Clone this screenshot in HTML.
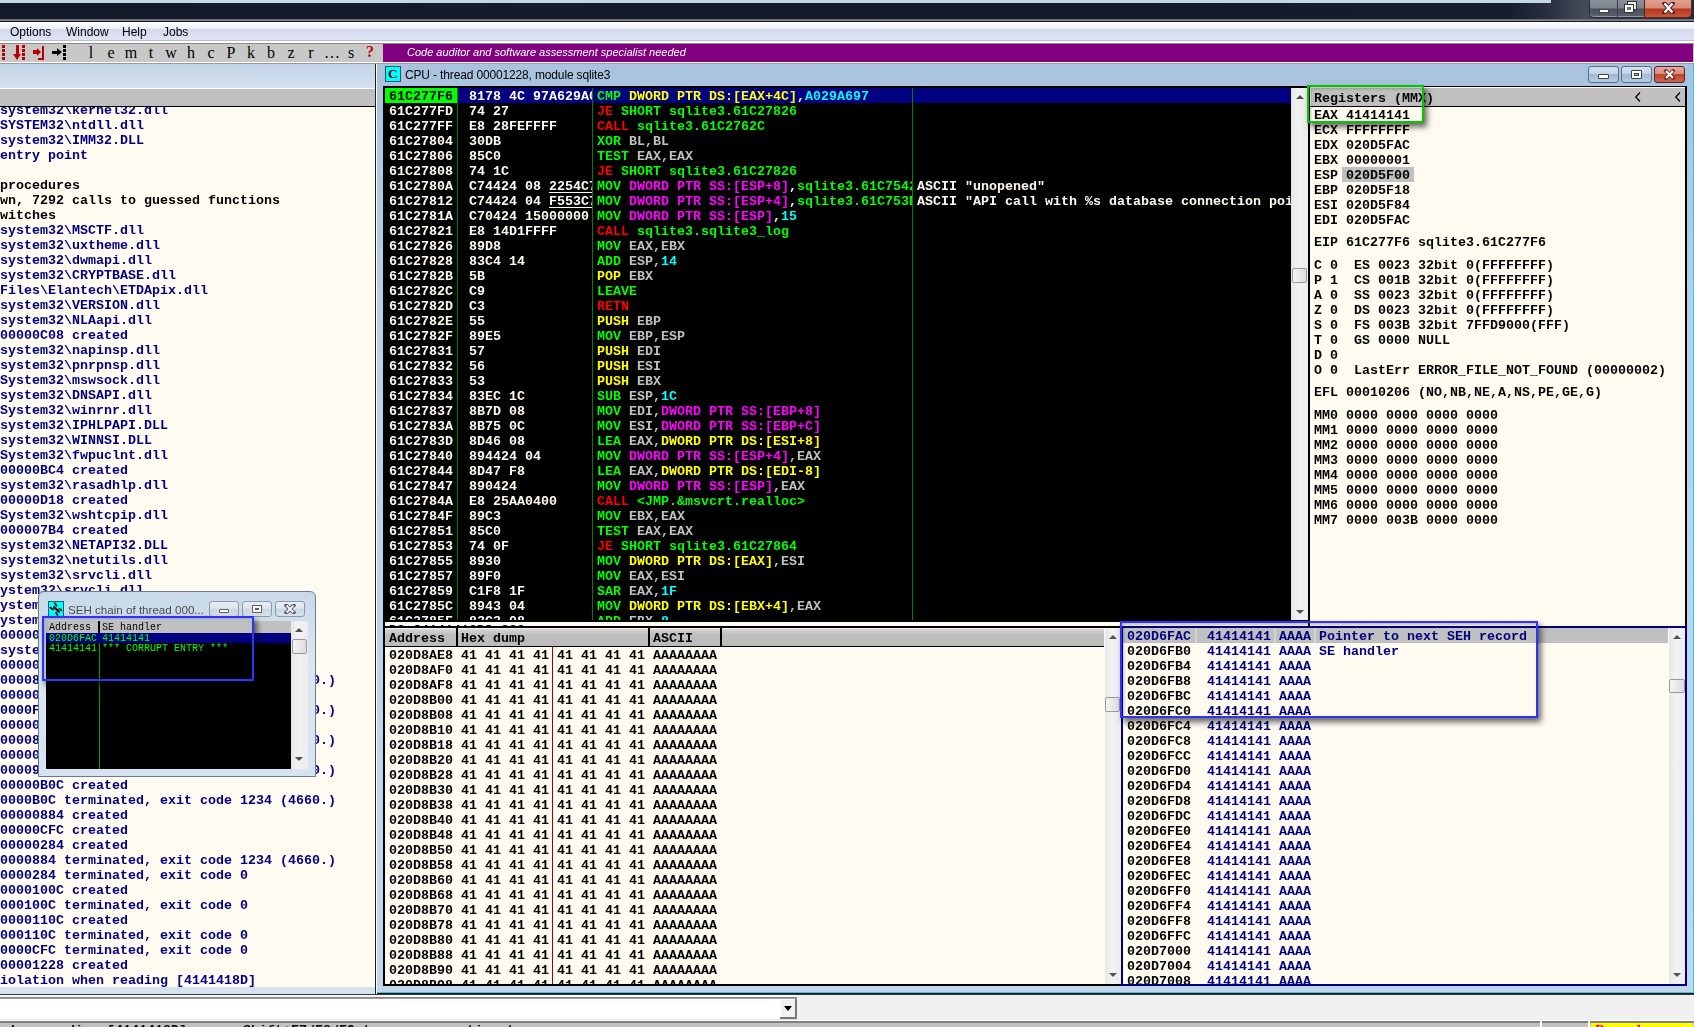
<!DOCTYPE html><html><head><meta charset="utf-8"><style>html,body{margin:0;padding:0;}body{width:1694px;height:1027px;overflow:hidden;position:relative;background:#F0F0F0;}div{box-sizing:border-box;}.m{font-family:'Liberation Mono',monospace;font-weight:bold;font-size:13.33px;line-height:15px;white-space:pre;will-change:transform;}.s{font-family:"Liberation Sans",sans-serif;will-change:transform;}</style></head><body><div style="position:absolute;left:0px;top:0px;width:1694px;height:21px;background:linear-gradient(90deg,#141a2a 0%,#141b2b 75%,#161d2c 89%,#2a3040 91.5%,#454b58 93.5%,#30364a 96%,#222838 100%);"></div><div style="position:absolute;left:0px;top:0px;width:1551px;height:3px;background:#c5d7ea;"></div><div style="position:absolute;left:0px;top:19px;width:1694px;height:2px;background:linear-gradient(#5d6370,#8a8e98);"></div><div style="position:absolute;left:0px;top:21px;width:1694px;height:1px;background:#151820;"></div><div style="position:absolute;left:1589px;top:0px;width:103px;height:18px;border:1px solid #2a2e36;border-top:none;border-radius:0 0 5px 5px;background:linear-gradient(#8a9099 0%,#7d838d 45%,#4a505c 55%,#5a606c 100%);box-shadow:inset 0 -1px 0 rgba(255,255,255,0.35);"></div><div style="position:absolute;left:1644px;top:0px;width:48px;height:18px;border:1px solid #5a2620;border-top:none;border-radius:0 0 5px 0;background:linear-gradient(#e2a090 0%,#d88a78 45%,#b8381c 55%,#c9553a 100%);"></div><div style="position:absolute;left:1617px;top:0px;width:1px;height:17px;background:#3b3f48;"></div><div style="position:absolute;left:1599px;top:9px;width:10px;height:4px;background:#fff;border:1px solid #444;"></div><div style="position:absolute;left:1628px;top:2px;width:8px;height:7px;border:2px solid #e8e8e8;box-shadow:0 0 0 1px #333;"></div><div style="position:absolute;left:1625px;top:5px;width:8px;height:7px;border:2px solid #fff;box-shadow:0 0 0 1px #333;background:#6a707a;"></div><svg style="position:absolute;left:1662px;top:2px" width="13" height="12"><path d="M2.5 1.5 L10.5 10.5 M10.5 1.5 L2.5 10.5" stroke="#4a2020" stroke-width="4.2" stroke-linecap="square"/><path d="M2.5 1.5 L10.5 10.5 M10.5 1.5 L2.5 10.5" stroke="#ffffff" stroke-width="2.4"/></svg><div style="position:absolute;left:0px;top:22px;width:1694px;height:18px;background:linear-gradient(#ffffff 0%,#eef1f8 35%,#e6eaf5 38%,#d4daee 41%,#dee3f4 100%);"></div><div style="position:absolute;left:0px;top:40px;width:1694px;height:1px;background:#b8bece;"></div><div style="position:absolute;left:0px;top:41px;width:1694px;height:2px;background:#ffffff;"></div><div class="s" style="position:absolute;left:10px;top:25px;font-size:12px;color:#000;">Options</div><div class="s" style="position:absolute;left:66px;top:25px;font-size:12px;color:#000;">Window</div><div class="s" style="position:absolute;left:122px;top:25px;font-size:12px;color:#000;">Help</div><div class="s" style="position:absolute;left:163px;top:25px;font-size:12px;color:#000;">Jobs</div><div style="position:absolute;left:0px;top:43px;width:1694px;height:1px;background:#8a8c88;"></div><div style="position:absolute;left:0px;top:44px;width:1694px;height:18px;background:#c8c8c8;"></div><div style="position:absolute;left:0px;top:62px;width:1694px;height:1px;background:#ffffff;"></div><div style="position:absolute;left:0px;top:63px;width:1694px;height:1px;background:#9a9a9a;"></div><div style="position:absolute;left:2px;top:45px;width:3px;height:3px;background:#b80000;"></div><div style="position:absolute;left:22px;top:45px;width:3px;height:3px;background:#b80000;"></div><div style="position:absolute;left:63px;top:45px;width:3px;height:3px;background:#000;"></div><div style="position:absolute;left:2px;top:49px;width:3px;height:3px;background:#b80000;"></div><div style="position:absolute;left:22px;top:49px;width:3px;height:3px;background:#b80000;"></div><div style="position:absolute;left:63px;top:49px;width:3px;height:3px;background:#000;"></div><div style="position:absolute;left:2px;top:53px;width:3px;height:3px;background:#b80000;"></div><div style="position:absolute;left:22px;top:53px;width:3px;height:3px;background:#b80000;"></div><div style="position:absolute;left:63px;top:53px;width:3px;height:3px;background:#000;"></div><div style="position:absolute;left:2px;top:57px;width:3px;height:3px;background:#b80000;"></div><div style="position:absolute;left:22px;top:57px;width:3px;height:3px;background:#b80000;"></div><div style="position:absolute;left:63px;top:57px;width:3px;height:3px;background:#000;"></div><div style="position:absolute;left:16px;top:45px;width:3px;height:10px;background:#b80000;"></div><div style="position:absolute;left:13px;top:54px;width:0;height:0;border-left:4.5px solid transparent;border-right:4.5px solid transparent;border-top:6px solid #b80000;"></div><div style="position:absolute;left:33px;top:50px;width:5px;height:4px;background:#b80000;"></div><div style="position:absolute;left:37px;top:48px;width:0;height:0;border-top:4px solid transparent;border-bottom:4px solid transparent;border-left:4px solid #b80000;"></div><div style="position:absolute;left:42px;top:46px;width:2px;height:14px;background:#b80000;"></div><div style="position:absolute;left:38px;top:58px;width:6px;height:2px;background:#b80000;"></div><div style="position:absolute;left:52px;top:51px;width:6px;height:3px;background:#000;"></div><div style="position:absolute;left:57px;top:48px;width:0;height:0;border-top:4.5px solid transparent;border-bottom:4.5px solid transparent;border-left:5px solid #000;"></div><div style="position:absolute;left:84px;top:44px;font-family:'Liberation Serif',serif;font-size:16px;color:#000;width:14px;text-align:center;">l</div><div style="position:absolute;left:104px;top:44px;font-family:'Liberation Serif',serif;font-size:16px;color:#000;width:14px;text-align:center;">e</div><div style="position:absolute;left:124px;top:44px;font-family:'Liberation Serif',serif;font-size:16px;color:#000;width:14px;text-align:center;">m</div><div style="position:absolute;left:144px;top:44px;font-family:'Liberation Serif',serif;font-size:16px;color:#000;width:14px;text-align:center;">t</div><div style="position:absolute;left:164px;top:44px;font-family:'Liberation Serif',serif;font-size:16px;color:#000;width:14px;text-align:center;">w</div><div style="position:absolute;left:184px;top:44px;font-family:'Liberation Serif',serif;font-size:16px;color:#000;width:14px;text-align:center;">h</div><div style="position:absolute;left:204px;top:44px;font-family:'Liberation Serif',serif;font-size:16px;color:#000;width:14px;text-align:center;">c</div><div style="position:absolute;left:224px;top:44px;font-family:'Liberation Serif',serif;font-size:16px;color:#000;width:14px;text-align:center;">P</div><div style="position:absolute;left:244px;top:44px;font-family:'Liberation Serif',serif;font-size:16px;color:#000;width:14px;text-align:center;">k</div><div style="position:absolute;left:264px;top:44px;font-family:'Liberation Serif',serif;font-size:16px;color:#000;width:14px;text-align:center;">b</div><div style="position:absolute;left:284px;top:44px;font-family:'Liberation Serif',serif;font-size:16px;color:#000;width:14px;text-align:center;">z</div><div style="position:absolute;left:304px;top:44px;font-family:'Liberation Serif',serif;font-size:16px;color:#000;width:14px;text-align:center;">r</div><div style="position:absolute;left:324px;top:44px;font-family:'Liberation Serif',serif;font-size:16px;color:#000;width:14px;text-align:center;">…</div><div style="position:absolute;left:344px;top:44px;font-family:'Liberation Serif',serif;font-size:16px;color:#000;width:14px;text-align:center;">s</div><div style="position:absolute;left:366px;top:43px;font-family:'Liberation Serif',serif;font-weight:bold;font-size:16px;color:#c00000;">?</div><div style="position:absolute;left:383px;top:44px;width:1310px;height:18px;background:#800080;"></div><div class="s" style="position:absolute;left:407px;top:46px;font-size:11px;font-style:italic;color:#fff;">Code auditor and software assessment specialist needed</div><div style="position:absolute;left:0px;top:64px;width:1694px;height:929px;background:#b9d1ea;"></div><div style="position:absolute;left:0px;top:64px;width:375px;height:24px;background:linear-gradient(#c3d4e7,#d3e1f0);"></div><div style="position:absolute;left:0px;top:88px;width:375px;height:1px;background:#ffffff;"></div><div style="position:absolute;left:0px;top:89px;width:375px;height:17px;background:#c0c0c0;"></div><div style="position:absolute;left:0px;top:106px;width:375px;height:1px;background:#000;"></div><div style="position:absolute;left:0px;top:107px;width:375px;height:880px;background:#FFFBF0;"></div><div style="position:absolute;left:0px;top:987px;width:375px;height:7px;background:#d6e2f0;"></div><div style="position:absolute;left:375px;top:64px;width:1px;height:930px;background:#1e1e1e;"></div><div style="position:absolute;left:376px;top:64px;width:1px;height:930px;background:#ffffff;"></div><div style="position:absolute;left:0;top:107px;width:375px;height:880px;overflow:hidden;"><div class="m" style="position:absolute;left:0px;top:-4px;"><div style="height:15px;color:#000080;">system32\kernel32.dll</div><div style="height:15px;color:#000080;">SYSTEM32\ntdll.dll</div><div style="height:15px;color:#000080;">system32\IMM32.DLL</div><div style="height:15px;color:#000080;">entry point</div><div style="height:15px;color:#000080;"></div><div style="height:15px;color:#000;">procedures</div><div style="height:15px;color:#000;">wn, 7292 calls to guessed functions</div><div style="height:15px;color:#000;">witches</div><div style="height:15px;color:#000080;">system32\MSCTF.dll</div><div style="height:15px;color:#000080;">system32\uxtheme.dll</div><div style="height:15px;color:#000080;">system32\dwmapi.dll</div><div style="height:15px;color:#000080;">system32\CRYPTBASE.dll</div><div style="height:15px;color:#000080;">Files\Elantech\ETDApix.dll</div><div style="height:15px;color:#000080;">system32\VERSION.dll</div><div style="height:15px;color:#000080;">system32\NLAapi.dll</div><div style="height:15px;color:#000080;">00000C08 created</div><div style="height:15px;color:#000080;">system32\napinsp.dll</div><div style="height:15px;color:#000080;">system32\pnrpnsp.dll</div><div style="height:15px;color:#000080;">System32\mswsock.dll</div><div style="height:15px;color:#000080;">system32\DNSAPI.dll</div><div style="height:15px;color:#000080;">System32\winrnr.dll</div><div style="height:15px;color:#000080;">system32\IPHLPAPI.DLL</div><div style="height:15px;color:#000080;">system32\WINNSI.DLL</div><div style="height:15px;color:#000080;">System32\fwpuclnt.dll</div><div style="height:15px;color:#000080;">00000BC4 created</div><div style="height:15px;color:#000080;">system32\rasadhlp.dll</div><div style="height:15px;color:#000080;">00000D18 created</div><div style="height:15px;color:#000080;">System32\wshtcpip.dll</div><div style="height:15px;color:#000080;">000007B4 created</div><div style="height:15px;color:#000080;">system32\NETAPI32.DLL</div><div style="height:15px;color:#000080;">system32\netutils.dll</div><div style="height:15px;color:#000080;">system32\srvcli.dll</div><div style="height:15px;color:#000080;">ystem32\srvcli.dll</div><div style="height:15px;color:#000080;">ystem32\sspicli.dll</div><div style="height:15px;color:#000080;">ystem32\sechost.dll</div><div style="height:15px;color:#000080;">00000C28 created</div><div style="height:15px;color:#000080;">system32\apphelp.dll</div><div style="height:15px;color:#000080;">00000A18 created</div><div style="height:15px;color:#000080;">00008A8 terminated, exit code 1234 (4660.)</div><div style="height:15px;color:#000080;">00000F14 created</div><div style="height:15px;color:#000080;">0000F14 terminated, exit code 1234 (4660.)</div><div style="height:15px;color:#000080;">00000894 created</div><div style="height:15px;color:#000080;">0000894 terminated, exit code 1234 (4660.)</div><div style="height:15px;color:#000080;">00000954 created</div><div style="height:15px;color:#000080;">0000954 terminated, exit code 1234 (4660.)</div><div style="height:15px;color:#000080;">00000B0C created</div><div style="height:15px;color:#000080;">0000B0C terminated, exit code 1234 (4660.)</div><div style="height:15px;color:#000080;">00000884 created</div><div style="height:15px;color:#000080;">00000CFC created</div><div style="height:15px;color:#000080;">00000284 created</div><div style="height:15px;color:#000080;">0000884 terminated, exit code 1234 (4660.)</div><div style="height:15px;color:#000080;">0000284 terminated, exit code 0</div><div style="height:15px;color:#000080;">0000100C created</div><div style="height:15px;color:#000080;">000100C terminated, exit code 0</div><div style="height:15px;color:#000080;">0000110C created</div><div style="height:15px;color:#000080;">000110C terminated, exit code 0</div><div style="height:15px;color:#000080;">0000CFC terminated, exit code 0</div><div style="height:15px;color:#000080;">00001228 created</div><div style="height:15px;color:#000080;">iolation when reading [4141418D]</div></div></div><div style="position:absolute;left:377px;top:64px;width:1317px;height:929px;background:linear-gradient(#a9c3df 0%,#b9d1ea 30%,#c2d7ee 100%);"></div><div style="position:absolute;left:377px;top:992px;width:1317px;height:1px;background:#2ec8e8;"></div><div style="position:absolute;left:1693px;top:64px;width:1px;height:929px;background:#2ec8e8;"></div><div style="position:absolute;left:377px;top:993px;width:1317px;height:1px;background:#101010;"></div><div style="position:absolute;left:385px;top:66px;width:16px;height:16px;background:#00ffff;border:1px solid #1a5a6a;"></div><div style="position:absolute;left:388px;top:66px;font-family:'Liberation Serif',serif;font-weight:bold;font-size:13px;color:#000;">C</div><div class="s" style="position:absolute;left:405px;top:68px;font-size:12px;letter-spacing:-0.15px;color:#000;">CPU - thread 00001228, module sqlite3</div><div style="position:absolute;left:1588px;top:66px;width:31px;height:17px;background:linear-gradient(#d2e0ee 0%,#c2d4e8 45%,#a2bad4 50%,#b6cce4 100%);border:1px solid #5a6e88;border-radius:3px;"></div><div style="position:absolute;left:1621px;top:66px;width:31px;height:17px;background:linear-gradient(#d2e0ee 0%,#c2d4e8 45%,#a2bad4 50%,#b6cce4 100%);border:1px solid #5a6e88;border-radius:3px;"></div><div style="position:absolute;left:1654px;top:66px;width:31px;height:17px;background:linear-gradient(#e8a898 0%,#dc8c7a 45%,#c0442a 50%,#d0664c 100%);border:1px solid #5a2030;border-radius:3px;"></div><div style="position:absolute;left:1598px;top:74px;width:11px;height:5px;background:#fff;border:1px solid #3a4250;border-radius:1px;"></div><div style="position:absolute;left:1631px;top:70px;width:11px;height:9px;background:#fff;border:1px solid #3a4250;border-radius:1px;box-shadow:inset 0 0 0 2px #fff;"></div><div style="position:absolute;left:1634px;top:73px;width:5px;height:3px;background:#a2bad4;border:1px solid #3a4250;"></div><svg style="position:absolute;left:1663px;top:69px" width="13" height="11"><path d="M3 2 L10 9 M10 2 L3 9" stroke="#5a3030" stroke-width="3.6" stroke-linecap="square"/><path d="M3 2 L10 9 M10 2 L3 9" stroke="#ffffff" stroke-width="2"/></svg><div style="position:absolute;left:383px;top:86px;width:1304px;height:900px;background:#000;"></div><div style="position:absolute;left:385px;top:88px;width:906px;height:534px;background:#000;"></div><div style="position:absolute;left:385px;top:88px;width:72px;height:15px;background:#00FF00;"></div><div style="position:absolute;left:458px;top:88px;width:833px;height:15px;background:#000080;"></div><div style="position:absolute;left:457px;top:88px;width:1px;height:532px;background:#008000;"></div><div style="position:absolute;left:592px;top:88px;width:1px;height:532px;background:#008000;"></div><div style="position:absolute;left:912px;top:88px;width:1px;height:532px;background:#008000;"></div><div style="position:absolute;left:549px;top:192px;width:43px;height:1px;background:#FFFBF0;"></div><div style="position:absolute;left:549px;top:207px;width:43px;height:1px;background:#FFFBF0;"></div><div style="position:absolute;left:385px;top:88px;width:72px;height:532px;overflow:hidden;"><div class="m" style="position:absolute;left:4px;top:1px;"><div style="height:15px;color:#000">61C277F6</div><div style="height:15px;color:#FFFBF0">61C277FD</div><div style="height:15px;color:#FFFBF0">61C277FF</div><div style="height:15px;color:#FFFBF0">61C27804</div><div style="height:15px;color:#FFFBF0">61C27806</div><div style="height:15px;color:#FFFBF0">61C27808</div><div style="height:15px;color:#FFFBF0">61C2780A</div><div style="height:15px;color:#FFFBF0">61C27812</div><div style="height:15px;color:#FFFBF0">61C2781A</div><div style="height:15px;color:#FFFBF0">61C27821</div><div style="height:15px;color:#FFFBF0">61C27826</div><div style="height:15px;color:#FFFBF0">61C27828</div><div style="height:15px;color:#FFFBF0">61C2782B</div><div style="height:15px;color:#FFFBF0">61C2782C</div><div style="height:15px;color:#FFFBF0">61C2782D</div><div style="height:15px;color:#FFFBF0">61C2782E</div><div style="height:15px;color:#FFFBF0">61C2782F</div><div style="height:15px;color:#FFFBF0">61C27831</div><div style="height:15px;color:#FFFBF0">61C27832</div><div style="height:15px;color:#FFFBF0">61C27833</div><div style="height:15px;color:#FFFBF0">61C27834</div><div style="height:15px;color:#FFFBF0">61C27837</div><div style="height:15px;color:#FFFBF0">61C2783A</div><div style="height:15px;color:#FFFBF0">61C2783D</div><div style="height:15px;color:#FFFBF0">61C27840</div><div style="height:15px;color:#FFFBF0">61C27844</div><div style="height:15px;color:#FFFBF0">61C27847</div><div style="height:15px;color:#FFFBF0">61C2784A</div><div style="height:15px;color:#FFFBF0">61C2784F</div><div style="height:15px;color:#FFFBF0">61C27851</div><div style="height:15px;color:#FFFBF0">61C27853</div><div style="height:15px;color:#FFFBF0">61C27855</div><div style="height:15px;color:#FFFBF0">61C27857</div><div style="height:15px;color:#FFFBF0">61C27859</div><div style="height:15px;color:#FFFBF0">61C2785C</div><div style="height:15px;color:#FFFBF0">61C2785F</div></div></div><div style="position:absolute;left:458px;top:88px;width:134px;height:532px;overflow:hidden;"><div class="m" style="position:absolute;left:11px;top:1px;"><div style="height:15px;color:#FFFBF0">8178 4C 97A629A0</div><div style="height:15px;color:#FFFBF0">74 27</div><div style="height:15px;color:#FFFBF0">E8 28FEFFFF</div><div style="height:15px;color:#FFFBF0">30DB</div><div style="height:15px;color:#FFFBF0">85C0</div><div style="height:15px;color:#FFFBF0">74 1C</div><div style="height:15px;color:#FFFBF0">C74424 08 2254C761</div><div style="height:15px;color:#FFFBF0">C74424 04 F553C761</div><div style="height:15px;color:#FFFBF0">C70424 15000000</div><div style="height:15px;color:#FFFBF0">E8 14D1FFFF</div><div style="height:15px;color:#FFFBF0">89D8</div><div style="height:15px;color:#FFFBF0">83C4 14</div><div style="height:15px;color:#FFFBF0">5B</div><div style="height:15px;color:#FFFBF0">C9</div><div style="height:15px;color:#FFFBF0">C3</div><div style="height:15px;color:#FFFBF0">55</div><div style="height:15px;color:#FFFBF0">89E5</div><div style="height:15px;color:#FFFBF0">57</div><div style="height:15px;color:#FFFBF0">56</div><div style="height:15px;color:#FFFBF0">53</div><div style="height:15px;color:#FFFBF0">83EC 1C</div><div style="height:15px;color:#FFFBF0">8B7D 08</div><div style="height:15px;color:#FFFBF0">8B75 0C</div><div style="height:15px;color:#FFFBF0">8D46 08</div><div style="height:15px;color:#FFFBF0">894424 04</div><div style="height:15px;color:#FFFBF0">8D47 F8</div><div style="height:15px;color:#FFFBF0">890424</div><div style="height:15px;color:#FFFBF0">E8 25AA0400</div><div style="height:15px;color:#FFFBF0">89C3</div><div style="height:15px;color:#FFFBF0">85C0</div><div style="height:15px;color:#FFFBF0">74 0F</div><div style="height:15px;color:#FFFBF0">8930</div><div style="height:15px;color:#FFFBF0">89F0</div><div style="height:15px;color:#FFFBF0">C1F8 1F</div><div style="height:15px;color:#FFFBF0">8943 04</div><div style="height:15px;color:#FFFBF0">83C3 08</div></div></div><div style="position:absolute;left:593px;top:88px;width:319px;height:532px;overflow:hidden;"><div class="m" style="position:absolute;left:4px;top:1px;"><div style="height:15px"><span style="color:#00FF00">CMP </span><span style="color:#FFFF00">DWORD PTR DS:[EAX+4C]</span><span style="color:#FFFBF0">,</span><span style="color:#00FFFF">A029A697</span></div><div style="height:15px"><span style="color:#FF0000">JE </span><span style="color:#00FF00">SHORT sqlite3.61C27826</span></div><div style="height:15px"><span style="color:#FF0000">CALL </span><span style="color:#00FF00">sqlite3.61C2762C</span></div><div style="height:15px"><span style="color:#00FF00">XOR </span><span style="color:#C0C0C0">BL,BL</span></div><div style="height:15px"><span style="color:#00FF00">TEST </span><span style="color:#C0C0C0">EAX,EAX</span></div><div style="height:15px"><span style="color:#FF0000">JE </span><span style="color:#00FF00">SHORT sqlite3.61C27826</span></div><div style="height:15px"><span style="color:#00FF00">MOV </span><span style="color:#FF00FF">DWORD PTR SS:[ESP+8]</span><span style="color:#FFFBF0">,</span><span style="color:#00FF00">sqlite3.61C75422</span></div><div style="height:15px"><span style="color:#00FF00">MOV </span><span style="color:#FF00FF">DWORD PTR SS:[ESP+4]</span><span style="color:#FFFBF0">,</span><span style="color:#00FF00">sqlite3.61C753D5</span></div><div style="height:15px"><span style="color:#00FF00">MOV </span><span style="color:#FF00FF">DWORD PTR SS:[ESP]</span><span style="color:#FFFBF0">,</span><span style="color:#00FFFF">15</span></div><div style="height:15px"><span style="color:#FF0000">CALL </span><span style="color:#00FF00">sqlite3.sqlite3_log</span></div><div style="height:15px"><span style="color:#00FF00">MOV </span><span style="color:#C0C0C0">EAX,EBX</span></div><div style="height:15px"><span style="color:#00FF00">ADD </span><span style="color:#C0C0C0">ESP,</span><span style="color:#00FFFF">14</span></div><div style="height:15px"><span style="color:#FFFF00">POP </span><span style="color:#C0C0C0">EBX</span></div><div style="height:15px"><span style="color:#00FF00">LEAVE</span></div><div style="height:15px"><span style="color:#FF0000">RETN</span></div><div style="height:15px"><span style="color:#FFFF00">PUSH </span><span style="color:#C0C0C0">EBP</span></div><div style="height:15px"><span style="color:#00FF00">MOV </span><span style="color:#C0C0C0">EBP,ESP</span></div><div style="height:15px"><span style="color:#FFFF00">PUSH </span><span style="color:#C0C0C0">EDI</span></div><div style="height:15px"><span style="color:#FFFF00">PUSH </span><span style="color:#C0C0C0">ESI</span></div><div style="height:15px"><span style="color:#FFFF00">PUSH </span><span style="color:#C0C0C0">EBX</span></div><div style="height:15px"><span style="color:#00FF00">SUB </span><span style="color:#C0C0C0">ESP,</span><span style="color:#00FFFF">1C</span></div><div style="height:15px"><span style="color:#00FF00">MOV </span><span style="color:#C0C0C0">EDI,</span><span style="color:#FF00FF">DWORD PTR SS:[EBP+8]</span></div><div style="height:15px"><span style="color:#00FF00">MOV </span><span style="color:#C0C0C0">ESI,</span><span style="color:#FF00FF">DWORD PTR SS:[EBP+C]</span></div><div style="height:15px"><span style="color:#00FF00">LEA </span><span style="color:#C0C0C0">EAX,</span><span style="color:#FFFF00">DWORD PTR DS:[ESI+8]</span></div><div style="height:15px"><span style="color:#00FF00">MOV </span><span style="color:#FF00FF">DWORD PTR SS:[ESP+4]</span><span style="color:#C0C0C0">,EAX</span></div><div style="height:15px"><span style="color:#00FF00">LEA </span><span style="color:#C0C0C0">EAX,</span><span style="color:#FFFF00">DWORD PTR DS:[EDI-8]</span></div><div style="height:15px"><span style="color:#00FF00">MOV </span><span style="color:#FF00FF">DWORD PTR SS:[ESP]</span><span style="color:#C0C0C0">,EAX</span></div><div style="height:15px"><span style="color:#FF0000">CALL </span><span style="color:#00FF00">&lt;JMP.&amp;msvcrt.realloc&gt;</span></div><div style="height:15px"><span style="color:#00FF00">MOV </span><span style="color:#C0C0C0">EBX,EAX</span></div><div style="height:15px"><span style="color:#00FF00">TEST </span><span style="color:#C0C0C0">EAX,EAX</span></div><div style="height:15px"><span style="color:#FF0000">JE </span><span style="color:#00FF00">SHORT sqlite3.61C27864</span></div><div style="height:15px"><span style="color:#00FF00">MOV </span><span style="color:#FFFF00">DWORD PTR DS:[EAX]</span><span style="color:#C0C0C0">,ESI</span></div><div style="height:15px"><span style="color:#00FF00">MOV </span><span style="color:#C0C0C0">EAX,ESI</span></div><div style="height:15px"><span style="color:#00FF00">SAR </span><span style="color:#C0C0C0">EAX,</span><span style="color:#00FFFF">1F</span></div><div style="height:15px"><span style="color:#00FF00">MOV </span><span style="color:#FFFF00">DWORD PTR DS:[EBX+4]</span><span style="color:#C0C0C0">,EAX</span></div><div style="height:15px"><span style="color:#00FF00">ADD </span><span style="color:#C0C0C0">EBX,</span><span style="color:#00FFFF">8</span></div></div></div><div style="position:absolute;left:913px;top:88px;width:378px;height:532px;overflow:hidden;"><div class="m" style="position:absolute;left:4px;top:1px;"><div style="height:15px;color:#FFFBF0"></div><div style="height:15px;color:#FFFBF0"></div><div style="height:15px;color:#FFFBF0"></div><div style="height:15px;color:#FFFBF0"></div><div style="height:15px;color:#FFFBF0"></div><div style="height:15px;color:#FFFBF0"></div><div style="height:15px;color:#FFFBF0">ASCII "unopened"</div><div style="height:15px;color:#FFFBF0">ASCII "API call with %s database connection pointer"</div><div style="height:15px;color:#FFFBF0"></div><div style="height:15px;color:#FFFBF0"></div><div style="height:15px;color:#FFFBF0"></div><div style="height:15px;color:#FFFBF0"></div><div style="height:15px;color:#FFFBF0"></div><div style="height:15px;color:#FFFBF0"></div><div style="height:15px;color:#FFFBF0"></div><div style="height:15px;color:#FFFBF0"></div><div style="height:15px;color:#FFFBF0"></div><div style="height:15px;color:#FFFBF0"></div><div style="height:15px;color:#FFFBF0"></div><div style="height:15px;color:#FFFBF0"></div><div style="height:15px;color:#FFFBF0"></div><div style="height:15px;color:#FFFBF0"></div><div style="height:15px;color:#FFFBF0"></div><div style="height:15px;color:#FFFBF0"></div><div style="height:15px;color:#FFFBF0"></div><div style="height:15px;color:#FFFBF0"></div><div style="height:15px;color:#FFFBF0"></div><div style="height:15px;color:#FFFBF0"></div><div style="height:15px;color:#FFFBF0"></div><div style="height:15px;color:#FFFBF0"></div><div style="height:15px;color:#FFFBF0"></div><div style="height:15px;color:#FFFBF0"></div><div style="height:15px;color:#FFFBF0"></div><div style="height:15px;color:#FFFBF0"></div><div style="height:15px;color:#FFFBF0"></div><div style="height:15px;color:#FFFBF0"></div></div></div><div style="position:absolute;left:1291px;top:88px;width:17px;height:532px;background:linear-gradient(90deg,#e6e6e6,#f2f2f2 40%,#ececec);"></div><div style="position:absolute;left:1296px;top:95px;width:0;height:0;border-left:4px solid transparent;border-right:4px solid transparent;border-bottom:4px solid #505050;"></div><div style="position:absolute;left:1296px;top:610px;width:0;height:0;border-left:4px solid transparent;border-right:4px solid transparent;border-top:4px solid #505050;"></div><div style="position:absolute;left:1292px;top:268px;width:15px;height:15px;background:linear-gradient(90deg,#f4f4f4,#dcdcdc);border:1px solid #9a9a9a;border-radius:2px;"></div><div style="position:absolute;left:1310px;top:88px;width:375px;height:534px;background:#FFFBF0;"></div><div style="position:absolute;left:1310px;top:87px;width:375px;height:1px;background:#ffffff;"></div><div style="position:absolute;left:1310px;top:88px;width:375px;height:18px;background:#c0c0c0;"></div><div style="position:absolute;left:1310px;top:106px;width:375px;height:1px;background:#000;"></div><div style="position:absolute;left:1310px;top:88px;width:1px;height:18px;background:#ffffff;"></div><div class="m" style="position:absolute;left:1314px;top:91px;color:#000;">Registers (MMX)</div><svg style="position:absolute;left:1634px;top:91px" width="8" height="12"><path d="M6 1.5 L1.8 6 L6 10.5" stroke="#000" stroke-width="1.3" fill="none"/></svg><svg style="position:absolute;left:1674px;top:91px" width="8" height="12"><path d="M6 1.5 L1.8 6 L6 10.5" stroke="#000" stroke-width="1.3" fill="none"/></svg><div style="position:absolute;left:1342px;top:167px;width:72px;height:15px;background:#c0c0c0;"></div><div class="m" style="position:absolute;left:1314px;top:108px;color:#000;">EAX 41414141</div><div class="m" style="position:absolute;left:1314px;top:123px;color:#000;">ECX FFFFFFFF</div><div class="m" style="position:absolute;left:1314px;top:138px;color:#000;">EDX 020D5FAC</div><div class="m" style="position:absolute;left:1314px;top:153px;color:#000;">EBX 00000001</div><div class="m" style="position:absolute;left:1314px;top:168px;color:#000;">ESP 020D5F00</div><div class="m" style="position:absolute;left:1314px;top:183px;color:#000;">EBP 020D5F18</div><div class="m" style="position:absolute;left:1314px;top:198px;color:#000;">ESI 020D5F84</div><div class="m" style="position:absolute;left:1314px;top:213px;color:#000;">EDI 020D5FAC</div><div class="m" style="position:absolute;left:1314px;top:235px;color:#000;">EIP 61C277F6 sqlite3.61C277F6</div><div class="m" style="position:absolute;left:1314px;top:258px;color:#000;">C 0  ES 0023 32bit 0(FFFFFFFF)</div><div class="m" style="position:absolute;left:1314px;top:273px;color:#000;">P 1  CS 001B 32bit 0(FFFFFFFF)</div><div class="m" style="position:absolute;left:1314px;top:288px;color:#000;">A 0  SS 0023 32bit 0(FFFFFFFF)</div><div class="m" style="position:absolute;left:1314px;top:303px;color:#000;">Z 0  DS 0023 32bit 0(FFFFFFFF)</div><div class="m" style="position:absolute;left:1314px;top:318px;color:#000;">S 0  FS 003B 32bit 7FFD9000(FFF)</div><div class="m" style="position:absolute;left:1314px;top:333px;color:#000;">T 0  GS 0000 NULL</div><div class="m" style="position:absolute;left:1314px;top:348px;color:#000;">D 0</div><div class="m" style="position:absolute;left:1314px;top:363px;color:#000;">O 0  LastErr ERROR_FILE_NOT_FOUND (00000002)</div><div class="m" style="position:absolute;left:1314px;top:385px;color:#000;">EFL 00010206 (NO,NB,NE,A,NS,PE,GE,G)</div><div class="m" style="position:absolute;left:1314px;top:408px;color:#000;">MM0 0000 0000 0000 0000</div><div class="m" style="position:absolute;left:1314px;top:423px;color:#000;">MM1 0000 0000 0000 0000</div><div class="m" style="position:absolute;left:1314px;top:438px;color:#000;">MM2 0000 0000 0000 0000</div><div class="m" style="position:absolute;left:1314px;top:453px;color:#000;">MM3 0000 0000 0000 0000</div><div class="m" style="position:absolute;left:1314px;top:468px;color:#000;">MM4 0000 0000 0000 0000</div><div class="m" style="position:absolute;left:1314px;top:483px;color:#000;">MM5 0000 0000 0000 0000</div><div class="m" style="position:absolute;left:1314px;top:498px;color:#000;">MM6 0000 0000 0000 0000</div><div class="m" style="position:absolute;left:1314px;top:513px;color:#000;">MM7 0000 003B 0000 0000</div><div style="position:absolute;left:385px;top:622px;width:1300px;height:4px;background:#FFFBF0;"></div><div style="position:absolute;left:1308px;top:622px;width:2px;height:4px;background:#000;"></div><div style="position:absolute;left:385px;top:622px;width:736px;height:4px;overflow:hidden;"><div class="m" style="position:absolute;left:4px;top:1px;color:#000;">DS:[4141418D]=???</div></div><div style="position:absolute;left:385px;top:628px;width:736px;height:356px;background:#FFFBF0;"></div><div style="position:absolute;left:385px;top:628px;width:719px;height:18px;background:#c0c0c0;"></div><div style="position:absolute;left:385px;top:628px;width:71px;height:18px;background:linear-gradient(#d8d8d8,#c0c0c0 30%,#bababa);border-top:1px solid #f0f0f0;"></div><div style="position:absolute;left:458px;top:628px;width:190px;height:18px;background:linear-gradient(#d8d8d8,#c0c0c0 30%,#bababa);border-top:1px solid #f0f0f0;"></div><div style="position:absolute;left:650px;top:628px;width:70px;height:18px;background:linear-gradient(#d8d8d8,#c0c0c0 30%,#bababa);border-top:1px solid #f0f0f0;"></div><div style="position:absolute;left:722px;top:628px;width:382px;height:18px;background:linear-gradient(#d8d8d8,#c0c0c0 30%,#bababa);border-top:1px solid #f0f0f0;"></div><div style="position:absolute;left:456px;top:628px;width:2px;height:18px;background:#000;"></div><div style="position:absolute;left:648px;top:628px;width:2px;height:18px;background:#000;"></div><div style="position:absolute;left:720px;top:628px;width:2px;height:18px;background:#000;"></div><div style="position:absolute;left:385px;top:646px;width:719px;height:1px;background:#000;"></div><div class="m" style="position:absolute;left:389px;top:631px;color:#000;">Address</div><div class="m" style="position:absolute;left:461px;top:631px;color:#000;">Hex dump</div><div class="m" style="position:absolute;left:653px;top:631px;color:#000;">ASCII</div><div style="position:absolute;left:552px;top:647px;width:1px;height:337px;background:#a00000;"></div><div style="position:absolute;left:385px;top:647px;width:719px;height:337px;overflow:hidden;"><div class="m" style="position:absolute;left:4px;top:1px;color:#000;"><div style="height:15px">020D8AE8 41 41 41 41 41 41 41 41 AAAAAAAA</div><div style="height:15px">020D8AF0 41 41 41 41 41 41 41 41 AAAAAAAA</div><div style="height:15px">020D8AF8 41 41 41 41 41 41 41 41 AAAAAAAA</div><div style="height:15px">020D8B00 41 41 41 41 41 41 41 41 AAAAAAAA</div><div style="height:15px">020D8B08 41 41 41 41 41 41 41 41 AAAAAAAA</div><div style="height:15px">020D8B10 41 41 41 41 41 41 41 41 AAAAAAAA</div><div style="height:15px">020D8B18 41 41 41 41 41 41 41 41 AAAAAAAA</div><div style="height:15px">020D8B20 41 41 41 41 41 41 41 41 AAAAAAAA</div><div style="height:15px">020D8B28 41 41 41 41 41 41 41 41 AAAAAAAA</div><div style="height:15px">020D8B30 41 41 41 41 41 41 41 41 AAAAAAAA</div><div style="height:15px">020D8B38 41 41 41 41 41 41 41 41 AAAAAAAA</div><div style="height:15px">020D8B40 41 41 41 41 41 41 41 41 AAAAAAAA</div><div style="height:15px">020D8B48 41 41 41 41 41 41 41 41 AAAAAAAA</div><div style="height:15px">020D8B50 41 41 41 41 41 41 41 41 AAAAAAAA</div><div style="height:15px">020D8B58 41 41 41 41 41 41 41 41 AAAAAAAA</div><div style="height:15px">020D8B60 41 41 41 41 41 41 41 41 AAAAAAAA</div><div style="height:15px">020D8B68 41 41 41 41 41 41 41 41 AAAAAAAA</div><div style="height:15px">020D8B70 41 41 41 41 41 41 41 41 AAAAAAAA</div><div style="height:15px">020D8B78 41 41 41 41 41 41 41 41 AAAAAAAA</div><div style="height:15px">020D8B80 41 41 41 41 41 41 41 41 AAAAAAAA</div><div style="height:15px">020D8B88 41 41 41 41 41 41 41 41 AAAAAAAA</div><div style="height:15px">020D8B90 41 41 41 41 41 41 41 41 AAAAAAAA</div><div style="height:15px">020D8B98 41 41 41 41 41 41 41 41 AAAAAAAA</div></div></div><div style="position:absolute;left:1105px;top:628px;width:16px;height:356px;background:linear-gradient(90deg,#e6e6e6,#f2f2f2 40%,#ececec);"></div><div style="position:absolute;left:1109px;top:635px;width:0;height:0;border-left:4px solid transparent;border-right:4px solid transparent;border-bottom:4px solid #505050;"></div><div style="position:absolute;left:1109px;top:973px;width:0;height:0;border-left:4px solid transparent;border-right:4px solid transparent;border-top:4px solid #505050;"></div><div style="position:absolute;left:1105px;top:697px;width:15px;height:15px;background:linear-gradient(90deg,#f4f4f4,#dcdcdc);border:1px solid #9a9a9a;border-radius:2px;"></div><div style="position:absolute;left:1121px;top:626px;width:566px;height:360px;background:#000080;"></div><div style="position:absolute;left:1123px;top:628px;width:562px;height:356px;background:#FFFBF0;"></div><div style="position:absolute;left:1123px;top:628px;width:545px;height:15px;background:#c0c0c0;"></div><div style="position:absolute;left:1195px;top:628px;width:2px;height:15px;background:#d4d4d4;"></div><div style="position:absolute;left:1274px;top:628px;width:2px;height:15px;background:#d4d4d4;"></div><div style="position:absolute;left:1314px;top:628px;width:2px;height:15px;background:#d4d4d4;"></div><div style="position:absolute;left:1123px;top:628px;width:545px;height:356px;overflow:hidden;"><div class="m" style="position:absolute;left:4px;top:1px;"><div style="height:15px"><span style="color:#000080">020D6FAC</span>  <span style="color:#000080">41414141 AAAA Pointer to next SEH record</span></div><div style="height:15px"><span style="color:#000">020D6FB0</span>  <span style="color:#000080">41414141 AAAA SE handler</span></div><div style="height:15px"><span style="color:#000">020D6FB4</span>  <span style="color:#000080">41414141 AAAA</span></div><div style="height:15px"><span style="color:#000">020D6FB8</span>  <span style="color:#000080">41414141 AAAA</span></div><div style="height:15px"><span style="color:#000">020D6FBC</span>  <span style="color:#000080">41414141 AAAA</span></div><div style="height:15px"><span style="color:#000">020D6FC0</span>  <span style="color:#000080">41414141 AAAA</span></div><div style="height:15px"><span style="color:#000">020D6FC4</span>  <span style="color:#000080">41414141 AAAA</span></div><div style="height:15px"><span style="color:#000">020D6FC8</span>  <span style="color:#000080">41414141 AAAA</span></div><div style="height:15px"><span style="color:#000">020D6FCC</span>  <span style="color:#000080">41414141 AAAA</span></div><div style="height:15px"><span style="color:#000">020D6FD0</span>  <span style="color:#000080">41414141 AAAA</span></div><div style="height:15px"><span style="color:#000">020D6FD4</span>  <span style="color:#000080">41414141 AAAA</span></div><div style="height:15px"><span style="color:#000">020D6FD8</span>  <span style="color:#000080">41414141 AAAA</span></div><div style="height:15px"><span style="color:#000">020D6FDC</span>  <span style="color:#000080">41414141 AAAA</span></div><div style="height:15px"><span style="color:#000">020D6FE0</span>  <span style="color:#000080">41414141 AAAA</span></div><div style="height:15px"><span style="color:#000">020D6FE4</span>  <span style="color:#000080">41414141 AAAA</span></div><div style="height:15px"><span style="color:#000">020D6FE8</span>  <span style="color:#000080">41414141 AAAA</span></div><div style="height:15px"><span style="color:#000">020D6FEC</span>  <span style="color:#000080">41414141 AAAA</span></div><div style="height:15px"><span style="color:#000">020D6FF0</span>  <span style="color:#000080">41414141 AAAA</span></div><div style="height:15px"><span style="color:#000">020D6FF4</span>  <span style="color:#000080">41414141 AAAA</span></div><div style="height:15px"><span style="color:#000">020D6FF8</span>  <span style="color:#000080">41414141 AAAA</span></div><div style="height:15px"><span style="color:#000">020D6FFC</span>  <span style="color:#000080">41414141 AAAA</span></div><div style="height:15px"><span style="color:#000">020D7000</span>  <span style="color:#000080">41414141 AAAA</span></div><div style="height:15px"><span style="color:#000">020D7004</span>  <span style="color:#000080">41414141 AAAA</span></div><div style="height:15px"><span style="color:#000">020D7008</span>  <span style="color:#000080">41414141 AAAA</span></div></div></div><div style="position:absolute;left:1669px;top:628px;width:16px;height:356px;background:linear-gradient(90deg,#e6e6e6,#f2f2f2 40%,#ececec);"></div><div style="position:absolute;left:1673px;top:635px;width:0;height:0;border-left:4px solid transparent;border-right:4px solid transparent;border-bottom:4px solid #505050;"></div><div style="position:absolute;left:1673px;top:973px;width:0;height:0;border-left:4px solid transparent;border-right:4px solid transparent;border-top:4px solid #505050;"></div><div style="position:absolute;left:1669px;top:679px;width:16px;height:14px;background:linear-gradient(90deg,#f4f4f4,#dcdcdc);border:1px solid #9a9a9a;border-radius:2px;"></div><div style="position:absolute;left:38px;top:591px;width:278px;height:186px;background:linear-gradient(#c9d9ea,#dae6f3 40%,#d6e3f1);border:1px solid #6b7a8c;border-radius:6px 6px 0 0;"></div><div style="position:absolute;left:48px;top:601px;width:16px;height:16px;background:#00ffff;border:1px solid #006868;"></div><svg style="position:absolute;left:48px;top:601px" width="16" height="16"><path d="M5.5 5.5 L11.5 11.5" stroke="#000" stroke-width="2.2"/><path d="M6 2 Q8.5 3 8.5 5.5 M2 6 Q3.5 8.5 6 8.5 M10.5 8 Q13 8 14 10 M8 11 Q8 13 10 14.5" stroke="#000" stroke-width="1.6" fill="none"/></svg><div class="s" style="position:absolute;left:68px;top:603px;font-size:11.6px;color:#4a4a4a;white-space:nowrap;">SEH chain of thread 000...</div><div style="position:absolute;left:209px;top:601px;width:30px;height:16px;background:linear-gradient(#e6eef6 0%,#dde6f0 45%,#cbd6e2 50%,#d8e2ec 100%);border:1px solid #8e9aa8;border-radius:3px;"></div><div style="position:absolute;left:242px;top:601px;width:30px;height:16px;background:linear-gradient(#e6eef6 0%,#dde6f0 45%,#cbd6e2 50%,#d8e2ec 100%);border:1px solid #8e9aa8;border-radius:3px;"></div><div style="position:absolute;left:275px;top:601px;width:30px;height:16px;background:linear-gradient(#e6eef6 0%,#dde6f0 45%,#cbd6e2 50%,#d8e2ec 100%);border:1px solid #8e9aa8;border-radius:3px;"></div><div style="position:absolute;left:219px;top:609px;width:10px;height:4px;background:#fff;border:1px solid #5a6270;border-radius:1px;"></div><div style="position:absolute;left:252px;top:605px;width:10px;height:8px;background:#fff;border:1px solid #5a6270;"></div><div style="position:absolute;left:255px;top:608px;width:4px;height:2px;background:#cbd6e2;border:1px solid #5a6270;"></div><svg style="position:absolute;left:284px;top:604px" width="12" height="10"><path d="M2.5 1.5 L9.5 8.5 M9.5 1.5 L2.5 8.5" stroke="#4a5260" stroke-width="3.8" stroke-linecap="square"/><path d="M2.5 1.5 L9.5 8.5 M9.5 1.5 L2.5 8.5" stroke="#f4f6f8" stroke-width="2"/></svg><div style="position:absolute;left:46px;top:621px;width:245px;height:148px;background:#000;"></div><div style="position:absolute;left:46px;top:621px;width:245px;height:12px;background:#c0c0c0;"></div><div style="position:absolute;left:98px;top:621px;width:2px;height:12px;background:#000;"></div><div style="position:absolute;left:99px;top:633px;width:1px;height:136px;background:#00a000;"></div><div style="position:absolute;left:46px;top:633px;width:245px;height:10px;background:#000080;"></div><div style="position:absolute;left:49px;top:623px;font-family:'Liberation Mono',monospace;font-size:10px;line-height:10px;white-space:pre;will-change:transform;color:#000;">Address</div><div style="position:absolute;left:102px;top:623px;font-family:'Liberation Mono',monospace;font-size:10px;line-height:10px;white-space:pre;will-change:transform;color:#000;">SE handler</div><div style="position:absolute;left:49px;top:634px;font-family:'Liberation Mono',monospace;font-size:10px;line-height:10px;white-space:pre;will-change:transform;color:#00ff00;">020D6FAC</div><div style="position:absolute;left:102px;top:634px;font-family:'Liberation Mono',monospace;font-size:10px;line-height:10px;white-space:pre;will-change:transform;color:#00ff00;">41414141</div><div style="position:absolute;left:49px;top:644px;font-family:'Liberation Mono',monospace;font-size:10px;line-height:10px;white-space:pre;will-change:transform;color:#00ff00;">41414141</div><div style="position:absolute;left:102px;top:644px;font-family:'Liberation Mono',monospace;font-size:10px;line-height:10px;white-space:pre;will-change:transform;color:#00ff00;">*** CORRUPT ENTRY ***</div><div style="position:absolute;left:291px;top:621px;width:17px;height:148px;background:linear-gradient(90deg,#e6e6e6,#f2f2f2 40%,#ececec);"></div><div style="position:absolute;left:295px;top:628px;width:0;height:0;border-left:4px solid transparent;border-right:4px solid transparent;border-bottom:4px solid #505050;"></div><div style="position:absolute;left:295px;top:757px;width:0;height:0;border-left:4px solid transparent;border-right:4px solid transparent;border-top:4px solid #505050;"></div><div style="position:absolute;left:292px;top:639px;width:15px;height:15px;background:linear-gradient(90deg,#f4f4f4,#dcdcdc);border:1px solid #9a9a9a;border-radius:2px;"></div><div style="position:absolute;left:1307px;top:85px;width:117px;height:38px;border:2px solid #00c800;box-shadow:3px 4px 6px rgba(0,0,0,0.6),inset 2px 2px 3px rgba(0,0,0,0.25);"></div><div style="position:absolute;left:42px;top:616px;width:212px;height:65px;border:2px solid #3030ff;box-shadow:3px 4px 6px rgba(0,0,0,0.6),inset 2px 2px 3px rgba(0,0,0,0.25);"></div><div style="position:absolute;left:1120px;top:621px;width:418px;height:97px;border:2px solid #3030ff;box-shadow:3px 4px 6px rgba(0,0,0,0.6),inset 2px 2px 3px rgba(0,0,0,0.25);"></div><div style="position:absolute;left:0px;top:994px;width:1694px;height:1px;background:#3a3a3a;"></div><div style="position:absolute;left:0px;top:995px;width:797px;height:2px;background:#f8f8f8;"></div><div style="position:absolute;left:0px;top:997px;width:797px;height:2px;background:linear-gradient(#7a7a7a,#a8a8a8);"></div><div style="position:absolute;left:0px;top:999px;width:797px;height:20px;background:#ffffff;"></div><div style="position:absolute;left:0px;top:1019px;width:797px;height:1px;background:#e2e2e2;"></div><div style="position:absolute;left:780px;top:999px;width:17px;height:20px;background:#f0f0f0;border-right:2px solid #787878;border-bottom:2px solid #787878;box-shadow:inset 1px 1px 0 #fff;"></div><div style="position:absolute;left:784px;top:1006px;width:0;height:0;border-left:4.5px solid transparent;border-right:4.5px solid transparent;border-top:5px solid #000;"></div><div style="position:absolute;left:0px;top:1020px;width:1694px;height:1px;background:#ffffff;"></div><div style="position:absolute;left:0px;top:1021px;width:1694px;height:2px;background:#808080;"></div><div style="position:absolute;left:0px;top:1023px;width:1694px;height:4px;background:#c0c0c0;"></div><div style="position:absolute;left:1540px;top:1021px;width:2px;height:6px;background:#ffffff;"></div><div style="position:absolute;left:1588px;top:1021px;width:2px;height:6px;background:#ffffff;"></div><div style="position:absolute;left:1591px;top:1023px;width:102px;height:4px;background:#ffff00;"></div><div style="position:absolute;left:0;top:1021px;width:1540px;height:6px;overflow:hidden;"><div class="m" style="position:absolute;left:-133px;top:2px;color:#000;">Access violation when reading [4141418D] - use Shift+F7/F8/F9 to pass exception to program</div></div><div style="position:absolute;left:1591px;top:1021px;width:102px;height:6px;overflow:hidden;"><div class="m" style="position:absolute;left:4px;top:2px;color:#ff0000;font-family:'Liberation Serif',serif;font-size:15px;">Paused</div></div></body></html>
